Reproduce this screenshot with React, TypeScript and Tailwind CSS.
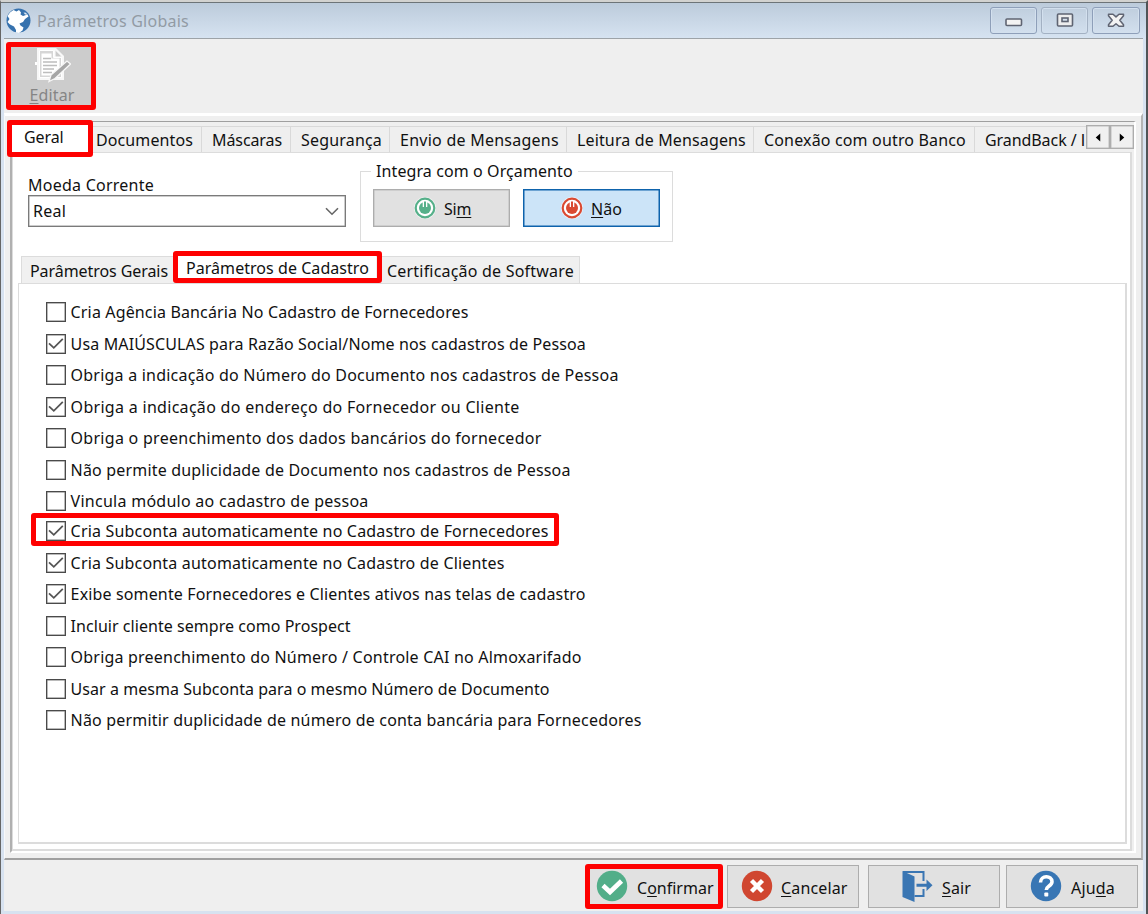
import { ReactNode, useState } from 'react';
import clsx from 'clsx';

interface Option {
  text: string;
  checked: boolean;
  tracking: string;
  marked?: boolean;
}

const OPTIONS: Option[] = [
  { text: 'Cria Agência Bancária No Cadastro de Fornecedores', checked: false, tracking: 'tracking-[0.145px]' },
  { text: 'Usa MAIÚSCULAS para Razão Social/Nome nos cadastros de Pessoa', checked: true, tracking: 'tracking-[0.135px]' },
  { text: 'Obriga a indicação do Número do Documento nos cadastros de Pessoa', checked: false, tracking: 'tracking-[0.214px]' },
  { text: 'Obriga a indicação do endereço do Fornecedor ou Cliente', checked: true, tracking: 'tracking-[0.298px]' },
  { text: 'Obriga o preenchimento dos dados bancários do fornecedor', checked: false, tracking: 'tracking-[0.278px]' },
  { text: 'Não permite duplicidade de Documento nos cadastros de Pessoa', checked: false, tracking: 'tracking-[0.18px]' },
  { text: 'Vincula módulo ao cadastro de pessoa', checked: false, tracking: 'tracking-[0.264px]' },
  { text: 'Cria Subconta automaticamente no Cadastro de Fornecedores', checked: true, tracking: 'tracking-[0.189px]', marked: true },
  { text: 'Cria Subconta automaticamente no Cadastro de Clientes', checked: true, tracking: 'tracking-[0.184px]' },
  { text: 'Exibe somente Fornecedores e Clientes ativos nas telas de cadastro', checked: true, tracking: 'tracking-[0.144px]' },
  { text: 'Incluir cliente sempre como Prospect', checked: false, tracking: 'tracking-[0.043px]' },
  { text: 'Obriga preenchimento do Número / Controle CAI no Almoxarifado', checked: false, tracking: 'tracking-[0.205px]' },
  { text: 'Usar a mesma Subconta para o mesmo Número de Documento', checked: false, tracking: 'tracking-[0.044px]' },
  { text: 'Não permitir duplicidade de número de conta bancária para Fornecedores', checked: false, tracking: 'tracking-[0.186px]' },
];

const TABS = [
  { text: 'Documentos', cls: 'w-[110px] pl-[4px] tracking-[0.1px]' },
  { text: 'Máscaras', cls: 'w-[89px] pl-[10px] tracking-[-0.09px]' },
  { text: 'Segurança', cls: 'w-[99px] pl-[10px] tracking-[0.18px]' },
  { text: 'Envio de Mensagens', cls: 'w-[177px] pl-[10px] tracking-[0.25px]' },
  { text: 'Leitura de Mensagens', cls: 'w-[187px] pl-[10px] tracking-[0.14px]' },
  { text: 'Conexão com outro Banco', cls: 'w-[221px] pl-[10px] tracking-[0.16px]' },
];

// Red outline drawn over a control
function Mark({ className }: { className: string }) {
  return <div className={clsx('absolute z-10 border-[5px] border-[#fe0000] rounded-[3px] pointer-events-none', className)} />;
}

function CheckRow({ option, onToggle }: { option: Option; onToggle: () => void }) {
  return (
    <div
      className={clsx(
        'relative flex items-start shrink-0 whitespace-nowrap',
        option.text.startsWith('Vincula') ? 'h-[30.2px]' : 'h-[31.5px]',
      )}
    >
      <button
        onClick={onToggle}
        role="checkbox"
        aria-checked={option.checked}
        className="flex items-center justify-center w-[20px] h-[20px] shrink-0 border-[1.5px] border-[#4a4a4a] bg-white shadow-[inset_0_0_0_0.5px_#777]"
      >
        {option.checked && (
          <svg viewBox="0 0 18 18" className="w-[18px] h-[18px] shrink-0">
            <path d="M2 8.3 6.800 12.800 15.800 3.800" fill="none" stroke="#555" strokeWidth="1.8" />
          </svg>
        )}
      </button>
      <span className={clsx('pl-[4.6px] leading-[20.5px]', option.tracking)}>{option.text}</span>
      {option.marked && <Mark className="-left-[15px] -top-[8px] w-[528px] h-[33px]" />}
    </div>
  );
}

function FooterButton({ icon, gap, pad, width, children }: { icon: ReactNode; gap: string; pad: string; width: string; children: ReactNode }) {
  return (
    <button
      className={clsx('relative flex items-center h-[43px] pb-[2px] border-[1.5px] border-[#adadad] bg-[#e1e1e1] whitespace-nowrap', gap, pad, width)}
    >
      {icon}
      <span className="pt-[4px]">{children}</span>
    </button>
  );
}

function PowerIcon({ color }: { color: string }) {
  return (
    <svg viewBox="0 0 22 22" className="w-[22px] h-[22px]">
      <circle cx="11" cy="11" r="11" fill="#fff" opacity="0.6" />
      <circle cx="11" cy="11" r="9.300" fill="#fff" stroke={color} strokeWidth="2.200" />
      <circle cx="11" cy="11" r="6" fill={color} />
      <path d="M11 3.500v6.500" stroke="#fff" strokeWidth="4.600" />
      <path d="M11 4.500v7" stroke={color} strokeWidth="2" />
    </svg>
  );
}

function GlobeIcon() {
  return (
    <svg viewBox="0 0 25 25" className="w-[25px] h-[25px]">
      <circle cx="12.5" cy="12.5" r="12" fill="#3672ae" />
      <path
        d="M1.500 8 4 4.500l3.500-2.500 3 1.500 2.500-1.500 2 2.500-.5 2 2.500 1.500 4.500-1.500 1 2-3.500 2.500-2 3-3.500 1.500 1 2 3 2-1 3-3.500 2.500-3-.500 0-2.500-2-3.500-4-2-2.500-2.500 2-3z"
        fill="#fff"
      />
      <path d="M17.500 4.500l2.500.300 1.500 2-2.500-.300z" fill="#dfe9f3" />
    </svg>
  );
}

function EditIcon() {
  return (
    <svg viewBox="0 0 36 36" className="w-[36px] h-[36px] ml-[4px]">
      <path d="M2 1h19l8 8v24H2z" fill="#f7f7f7" />
      <path d="M4.500 3.500h14v7h8v20h-22z" fill="#d6d6d6" stroke="#fff" strokeWidth="1" />
      <path d="M6.500 6.500h10v5h8v17h-18z" fill="#fff" />
      <path d="M8 11.500h8M8 15h14M8 18.500h14M8 22h11M8 25.500h9" stroke="#bdbdbd" strokeWidth="1.300" />
      <path d="M20 2.500 27.500 10H20z" fill="#cbcbcb" stroke="#fff" />
      <path d="M14 34.500l2-6.500L32 14l3.500 3L20 31.500z" fill="#a6a6a6" stroke="#f7f7f7" strokeWidth="1.300" />
      <path d="M1 15v3" stroke="#fff" strokeWidth="2" />
    </svg>
  );
}

export default function App() {
  const [options, setOptions] = useState(OPTIONS);

  const toggle = (i: number) =>
    setOptions((prev) => prev.map((o, n) => (n === i ? { ...o, checked: !o.checked } : o)));

  return (
    <div className="flex flex-col w-[1148px] h-[914px] overflow-hidden bg-[#d7e2f0] border-l border-l-[#666] border-r-2 border-r-[#505456] border-t-2 border-t-[#d2d2d0] font-['Noto_Sans',sans-serif] text-[16px] leading-[20px] text-[#111]">
      {/* Title bar */}
      <div className="flex items-center h-[36px] shrink-0 border-t border-t-[#6d7478] bg-linear-to-b from-[#bccbdb] to-[#d6e3f1] pl-[5px] pr-[6px] pb-px">
        <GlobeIcon />
        <span className="flex-1 pl-[6px] pt-px tracking-[0.25px] text-[#929ba4]">Parâmetros Globais</span>
        <div className="flex gap-[4px]">
          <button aria-label="Minimizar" className="flex items-center justify-center w-[47px] h-[27px] rounded-[3px] border-[1.5px] border-[#8e9fb9] shadow-[inset_0_0_0_1px_#d3e0ee]">
            <svg viewBox="0 0 18 9" className="w-[18px] h-[9px] mt-[4px]">
              <rect x="1" y="1" width="15.500" height="6.500" rx="1" fill="#f3f3f3" stroke="#5f6472" strokeWidth="1.600" />
            </svg>
          </button>
          <button aria-label="Maximizar" className="flex items-center justify-center w-[47px] h-[27px] rounded-[3px] border-[1.5px] border-[#a3b1c3] shadow-[inset_0_0_0_1px_#d3e0ee]">
            <svg viewBox="0 0 18 14" className="w-[18px] h-[14px]">
              <rect x="1.500" y="1" width="15" height="12" rx="1" fill="#ededed" stroke="#5f6472" strokeWidth="1.600" />
              <rect x="6" y="5" width="6" height="3.500" fill="#d5e0ec" stroke="#5f6472" strokeWidth="1.600" />
            </svg>
          </button>
          <button aria-label="Fechar" className="flex items-center justify-center w-[48px] h-[27px] rounded-[3px] border-[1.5px] border-[#8e9fb9] shadow-[inset_0_0_0_1px_#d3e0ee]">
            <svg viewBox="0 0 18 15" className="w-[18px] h-[15px]">
              <path
                d="M1.500 1.200h4.500l3 2.700 3-2.700h4.500v1.500L12.800 7.300l3.700 4.500v1.500H12L9 10.700 6 13.300H1.500v-1.500l3.700-4.500-3.700-4.600z"
                fill="#f3f3f3"
                stroke="#5f6472"
                strokeWidth="1.500"
                strokeLinejoin="round"
              />
            </svg>
          </button>
        </div>
      </div>

      <div className="flex flex-col flex-1 min-h-0 ml-[3px] mr-[3px] mb-[3px] border-t border-t-[#9da3a8] bg-[#efefef]">
        {/* Toolbar */}
        <div className="flex h-[74px] shrink-0 pl-[7px] pt-[8px]">
          <button className="relative flex flex-col items-center w-[80px] h-[58px] bg-[#cccccc] text-[#858585]">
            <EditIcon />
            <span className="pt-[2px] pl-[2px] tracking-[0.13px]"><u className="underline-offset-2">E</u>ditar</span>
            <Mark className="-left-[5px] -top-[5px] w-[90px] h-[68px]" />
          </button>
        </div>

        {/* Main page */}
        <div className="flex flex-col h-[747px] shrink-0 border-t-[3px] border-t-white border-r-2 border-r-[#b4b4b4] border-b-2 border-b-[#a0a0a0] border-l border-l-[#f7f8fa] pl-[5px] pr-[5px] pt-[5px] pb-[5px]">
          <div className="flex flex-col flex-1 min-h-0 border-t border-t-[#9f9f9f] border-l-2 border-l-[#b0b0b0] border-r-2 border-r-white border-b-2 border-b-white pr-[2px]">
            <div className="relative flex h-[30px] shrink-0 pt-[4px] whitespace-nowrap overflow-visible">
              <div className="relative w-[80px] h-[30px] -mt-[3px] shrink-0 bg-white">
                <div className="pl-[12px] pt-[4px] tracking-[-0.1px]">Geral</div>
                <Mark className="-left-[5px] -top-[3px] w-[86px] h-[37px]" />
              </div>
              {TABS.map((t) => (
                <div key={t.text} className={clsx('shrink-0 pt-[3px] border-t border-r border-[#d9d9d9]', t.cls)}>
                  {t.text}
                </div>
              ))}
              <div className="w-[111px] shrink-0 pl-[10px] pt-[3px] border-t border-[#d9d9d9] overflow-hidden tracking-[-0.07px]">
                GrandBack / <span className="font-['Liberation_Sans',sans-serif]">I</span>
              </div>
              <div className="flex h-[24px] -mt-px shrink-0">
                <button aria-label="Anterior" className="flex items-center justify-center w-[24px] border-[1.5px] border-[#adadad] bg-[#f0f0f0] shadow-[inset_0_0_0_0.5px_#bbb]">
                  <svg viewBox="0 0 6 10" className="w-[6px] h-[9px]"><path d="M5.500 0.500v9L.5 5z" fill="#000" /></svg>
                </button>
                <button aria-label="Próximo" className="flex items-center justify-center w-[24px] border-[1.5px] border-[#adadad] bg-[#f0f0f0] shadow-[inset_0_0_0_0.5px_#bbb]">
                  <svg viewBox="0 0 6 10" className="w-[6px] h-[9px]"><path d="M.5.500v9L5.500 5z" fill="#000" /></svg>
                </button>
              </div>
            </div>

            <div className="flex flex-col flex-1 min-h-0 border-t border-r-2 border-b-2 border-l border-[#dcdcdc] bg-white pl-[5px] pr-[3px] pb-[5px]">
              {/* Currency and budget */}
              <div className="flex h-[103px] shrink-0 pl-[10px]">
                <div className="w-[318px] pt-[22px]">
                  <div className="tracking-[0.24px]">Moeda Corrente</div>
                  <div className="flex items-center justify-between h-[32px] border-[1.5px] border-[#7a7a7a] pl-[4px] pr-[6px] shadow-[inset_0_0_0_0.5px_#999]">
                    <span className="tracking-[0.23px]">Real</span>
                    <svg viewBox="0 0 14 9" className="w-[14px] h-[9px]"><path d="M1 1.200l6 6 6-6" fill="none" stroke="#666" strokeWidth="1.600" /></svg>
                  </div>
                </div>
                <fieldset className="ml-[14px] mt-[8px] w-[313px] h-[81px] border border-[#dcdcdc]">
                  <legend className="ml-[10px] px-[5px] tracking-[0.1px] whitespace-nowrap">Integra com o Orçamento</legend>
                  <div className="flex gap-[13px] pl-[12px] pt-[8px]">
                    <button className="flex items-center w-[137px] h-[38px] pl-[40px] border-[1.5px] border-[#adadad] bg-[#e1e1e1] shadow-[inset_0_0_0_0.5px_#bbb]">
                      <PowerIcon color="#56b08a" />
                      <span className="pl-[8px] pt-px tracking-[-0.2px]">Si<u className="underline-offset-2">m</u></span>
                    </button>
                    <button className="flex items-center w-[137px] h-[38px] pl-[37px] border-[1.5px] border-[#0e63ac] bg-[#cce4f8] shadow-[inset_0_0_0_0.5px_#0e63ac]">
                      <PowerIcon color="#da4a32" />
                      <span className="pl-[8px] pt-px"><u className="underline-offset-2">N</u>ão</span>
                    </button>
                  </div>
                </fieldset>
              </div>

              {/* Inner tabs */}
              <div className="relative flex h-[27px] shrink-0 pl-[3px] whitespace-nowrap">
                <div className="w-[157px] pl-[8px] pt-[3.5px] border-t border-l border-[#dcdcdc] bg-[#f0f0f0] tracking-[-0.07px]">Parâmetros Gerais</div>
                <div className="relative w-[198px] pl-[8px] pt-[1.5px] bg-white tracking-[0.05px]">
                  Parâmetros de Cadastro
                  <Mark className="-left-[5px] -top-[5px] w-[209px] h-[32px]" />
                </div>
                <div className="w-[204px] pl-[11px] pt-[3.5px] border-t border-r border-[#dcdcdc] bg-[#f0f0f0] tracking-[0.2px]">Certificação de Software</div>
              </div>

              {/* Registration parameters */}
              <div className="flex flex-col flex-1 min-h-0 border border-r-2 border-b-2 border-[#dcdcdc] bg-white pl-[27px] pt-[18.3px]">
                {options.map((o, i) => (
                  <CheckRow key={o.text} option={o} onToggle={() => toggle(i)} />
                ))}
              </div>
            </div>
          </div>
        </div>

        {/* Footer buttons */}
        <div className="flex shrink-0 pt-[5px] pl-[584px]">
          <div className="relative">
            <FooterButton
              width="w-[131px] !border-[#0078d7]"
              pad="pl-[7px]"
              gap="gap-[9px]"
              icon={
                <svg viewBox="0 0 32 32" className="w-[32px] h-[32px]">
                  <circle cx="16" cy="16" r="15.200" fill="#52ae89" />
                  <path d="M7 15.500l7 6.500L25.500 11" fill="none" stroke="#fff" strokeWidth="4.600" />
                </svg>
              }
            >
              C<u className="underline-offset-2">o</u>nfirmar
            </FooterButton>
            <Mark className="-left-[3px] -top-[1px] w-[138px] h-[45px]" />
          </div>
          <div className="w-[8px]" />
          <FooterButton
            width="w-[132px]"
            pad="pl-[13px]"
            gap="gap-[8px]"
            icon={
              <svg viewBox="0 0 32 32" className="w-[32px] h-[32px]">
                <circle cx="16" cy="16" r="15.200" fill="#d04630" />
                <path d="M10.500 10.500l11 11M21.500 10.500l-11 11" stroke="#fff" strokeWidth="4.400" />
              </svg>
            }
          >
            <span className="tracking-[0.15px]"><u className="underline-offset-2">C</u>ancelar</span>
          </FooterButton>
          <div className="w-[9px]" />
          <FooterButton
            width="w-[132px]"
            pad="pl-[32px]"
            gap="gap-[9px]"
            icon={
              <svg viewBox="0 0 32 32" className="w-[32px] h-[32px]">
                <path d="M2 2h20.500v9M22.500 19v7h-9" fill="none" stroke="#3a76b3" strokeWidth="2" />
                <path d="M1.500 1l12 5.500V32l-12-5z" fill="#3a76b3" />
                <path d="M15.500 13.700h10V9.500l6 5.700-6 5.700v-4.200h-10z" fill="#3a76b3" />
              </svg>
            }
          >
            <span className="tracking-[0.13px]"><u className="underline-offset-2">S</u>air</span>
          </FooterButton>
          <div className="w-[6px]" />
          <FooterButton
            width="w-[132px]"
            pad="pl-[23px]"
            gap="gap-[9px]"
            icon={
              <svg viewBox="0 0 32 32" className="w-[32px] h-[32px]">
                <circle cx="16" cy="16" r="15.200" fill="#3876b4" />
                <path d="M10.500 12.500c0-7.500 11.500-7.500 11.500-.8 0 4.300-5.700 4.300-5.700 8.300" fill="none" stroke="#fff" strokeWidth="3.600" />
                <rect x="14.300" y="22.500" width="4" height="4" rx="1" fill="#fff" />
              </svg>
            }
          >
            <span className="tracking-[0.19px]">Aju<u className="underline-offset-2">d</u>a</span>
          </FooterButton>
        </div>
      </div>
    </div>
  );
}
